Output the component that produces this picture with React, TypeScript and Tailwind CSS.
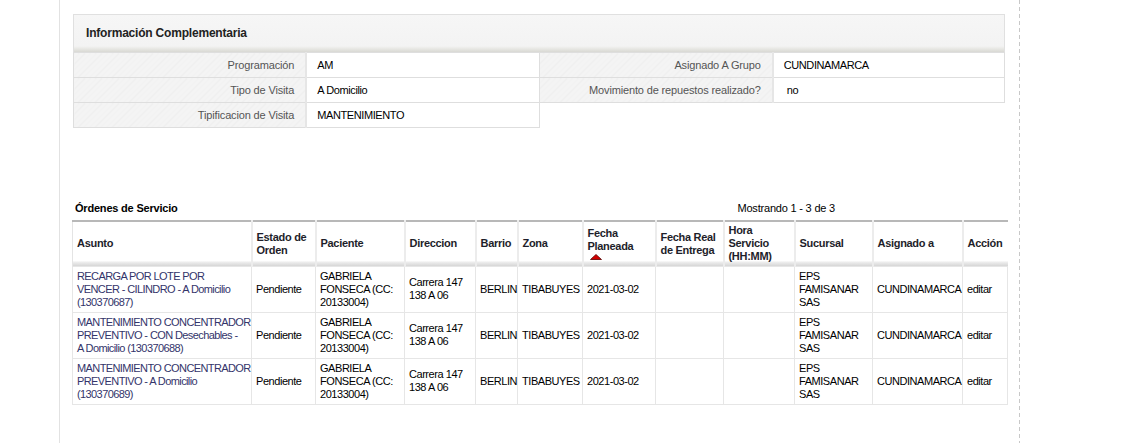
import React from 'react';

type Orden = {
  asunto: string[];
  estado: string;
  paciente: string;
  direccion: string;
  barrio: string;
  zona: string;
  fechaPlaneada: string;
  fechaReal: string;
  hora: string;
  sucursal: string;
  asignado: string;
};

// asunto lines are kept as the reference wraps them
const ordenes: Orden[] = [
  {
    asunto: ['RECARGA POR LOTE POR', 'VENCER - CILINDRO - A Domicilio', '(130370687)'],
    estado: 'Pendiente',
    paciente: 'GABRIELA FONSECA (CC: 20133004)',
    direccion: 'Carrera 147 138 A 06',
    barrio: 'BERLIN',
    zona: 'TIBABUYES',
    fechaPlaneada: '2021-03-02',
    fechaReal: '',
    hora: '',
    sucursal: 'EPS FAMISANAR SAS',
    asignado: 'CUNDINAMARCA',
  },
  {
    asunto: ['MANTENIMIENTO CONCENTRADOR', 'PREVENTIVO - CON Desechables -', 'A Domicilio (130370688)'],
    estado: 'Pendiente',
    paciente: 'GABRIELA FONSECA (CC: 20133004)',
    direccion: 'Carrera 147 138 A 06',
    barrio: 'BERLIN',
    zona: 'TIBABUYES',
    fechaPlaneada: '2021-03-02',
    fechaReal: '',
    hora: '',
    sucursal: 'EPS FAMISANAR SAS',
    asignado: 'CUNDINAMARCA',
  },
  {
    asunto: ['MANTENIMIENTO CONCENTRADOR', 'PREVENTIVO - A Domicilio', '(130370689)'],
    estado: 'Pendiente',
    paciente: 'GABRIELA FONSECA (CC: 20133004)',
    direccion: 'Carrera 147 138 A 06',
    barrio: 'BERLIN',
    zona: 'TIBABUYES',
    fechaPlaneada: '2021-03-02',
    fechaReal: '',
    hora: '',
    sucursal: 'EPS FAMISANAR SAS',
    asignado: 'CUNDINAMARCA',
  },
];

const columns = [
  { label: 'Asunto', width: 179 },
  { label: 'Estado de Orden', width: 64 },
  { label: 'Paciente', width: 89 },
  { label: 'Direccion', width: 71 },
  { label: 'Barrio', width: 42 },
  { label: 'Zona', width: 65 },
  { label: 'Fecha Planeada', width: 73, sorted: true },
  { label: 'Fecha Real de Entrega', width: 68 },
  { label: 'Hora Servicio (HH:MM)', width: 71 },
  { label: 'Sucursal', width: 78 },
  { label: 'Asignado a', width: 90 },
  { label: 'Acción', width: 45 },
];

const labelCell =
  'h-[25px] border border-[#dedede] border-r-2 border-r-[#e6e6e6] bg-[repeating-linear-gradient(135deg,#f4f4f4_0px,#f4f4f4_3px,#efefef_3px,#efefef_4px)] pr-[11px] text-right tracking-[-0.15px] text-[#555]';
const valueCell = 'h-[25px] border border-[#dedede] bg-white pl-[10px] tracking-[-0.4px] text-black';
const bodyCell = 'border border-[#e6e6e6] pl-[4px] pr-[2px] py-[3px]';

function SortArrow() {
  return (
    <svg width="12" height="6" viewBox="0 0 12 6" className="ml-[2px] mt-[1px] block">
      <polygon points="6,0.5 11.5,5.5 0.5,5.5" fill="#d30000" stroke="#5a0000" strokeWidth="0.8" />
    </svg>
  );
}

export default function App() {
  return (
    <div className="flex min-h-screen bg-white font-['Liberation_Sans',Arial,sans-serif] text-[11px] leading-[13px]">
      <div className="ml-[59px] w-[960px] border-l border-[#e2e2e2] pt-[14px]">
        <div className="ml-[13px] w-[932px]">
          <div className="flex h-[38px] items-center border border-b-0 border-[#e0e0e0] bg-[linear-gradient(to_bottom,#f6f6f6_0%,#f3f3f3_84%,#e6e6e2_92%,#d9d9d4_100%)] pl-[12px] text-[12px] font-bold tracking-[-0.2px] text-[#222]">
            Información Complementaria
          </div>
          <table className="table-fixed border-collapse">
            <colgroup>
              <col className="w-[233px]" />
              <col className="w-[233px]" />
              <col className="w-[234px]" />
              <col className="w-[232px]" />
            </colgroup>
            <tbody>
              <tr>
                <td className={labelCell}>Programación</td>
                <td className={valueCell}>AM</td>
                <td className={labelCell}>Asignado A Grupo</td>
                <td className={valueCell}>CUNDINAMARCA</td>
              </tr>
              <tr>
                <td className={labelCell}>Tipo de Visita</td>
                <td className={valueCell}>A Domicilio</td>
                <td className={labelCell}>Movimiento de repuestos realizado?</td>
                <td className={valueCell + ' pl-[13px]'}>no</td>
              </tr>
              <tr>
                <td className={labelCell}>Tipificacion de Visita</td>
                <td className={valueCell}>MANTENIMIENTO</td>
              </tr>
            </tbody>
          </table>
        </div>

        <div className="ml-[15px] mt-[74px] flex w-[760px] items-end justify-between pb-[5px] tracking-[-0.2px]">
          <span className="font-bold text-black">Órdenes de Servicio</span>
          <span className="text-black">Mostrando 1 - 3 de 3</span>
        </div>

        <table className="ml-[12px] w-[935px] table-fixed border-collapse border-t-2 border-[#b8b8b8]">
          <colgroup>
            {columns.map((c) => (
              <col key={c.label} style={{ width: c.width }} />
            ))}
          </colgroup>
          <thead>
            <tr className="h-[45px] bg-[linear-gradient(to_bottom,#ffffff_0%,#ffffff_88%,#ececec_92%,#d6d6d6_100%)]">
              {columns.map((c, i) => (
                <th
                  key={c.label}
                  className={
                    'pl-[4px] pr-[2px] py-[2px] text-left align-middle font-bold tracking-[-0.3px] text-[#1e1e2a] ' +
                    (i < columns.length - 1 ? 'border-r-2 border-[#ececec] ' : '') +
                    (i === 0 ? 'border-l border-l-[#e4e4e4]' : '')
                  }
                >
                  {c.label}
                  {c.sorted ? <SortArrow /> : null}
                </th>
              ))}
            </tr>
          </thead>
          <tbody className="tracking-[-0.45px]">
            {ordenes.map((o) => (
              <tr key={o.asunto.join(' ')} className="h-[46px] text-black">
                <td className="whitespace-nowrap border border-[#e6e6e6] py-[3px] pl-[4px] tracking-[-0.6px] text-[#33346a]">
                  {o.asunto.map((line) => (
                    <div key={line}>{line}</div>
                  ))}
                </td>
                <td className={bodyCell}>{o.estado}</td>
                <td className={bodyCell}>{o.paciente}</td>
                <td className={bodyCell}>{o.direccion}</td>
                <td className={bodyCell}>{o.barrio}</td>
                <td className={bodyCell}>{o.zona}</td>
                <td className={bodyCell}>{o.fechaPlaneada}</td>
                <td className={bodyCell}>{o.fechaReal}</td>
                <td className={bodyCell}>{o.hora}</td>
                <td className={bodyCell}>{o.sucursal}</td>
                <td className={bodyCell}>{o.asignado}</td>
                <td className={bodyCell}>editar</td>
              </tr>
            ))}
          </tbody>
        </table>
      </div>
      <div className="w-px self-stretch bg-[repeating-linear-gradient(to_bottom,#c8c8c8_0px,#c8c8c8_4px,transparent_4px,transparent_7px)]" />
    </div>
  );
}
